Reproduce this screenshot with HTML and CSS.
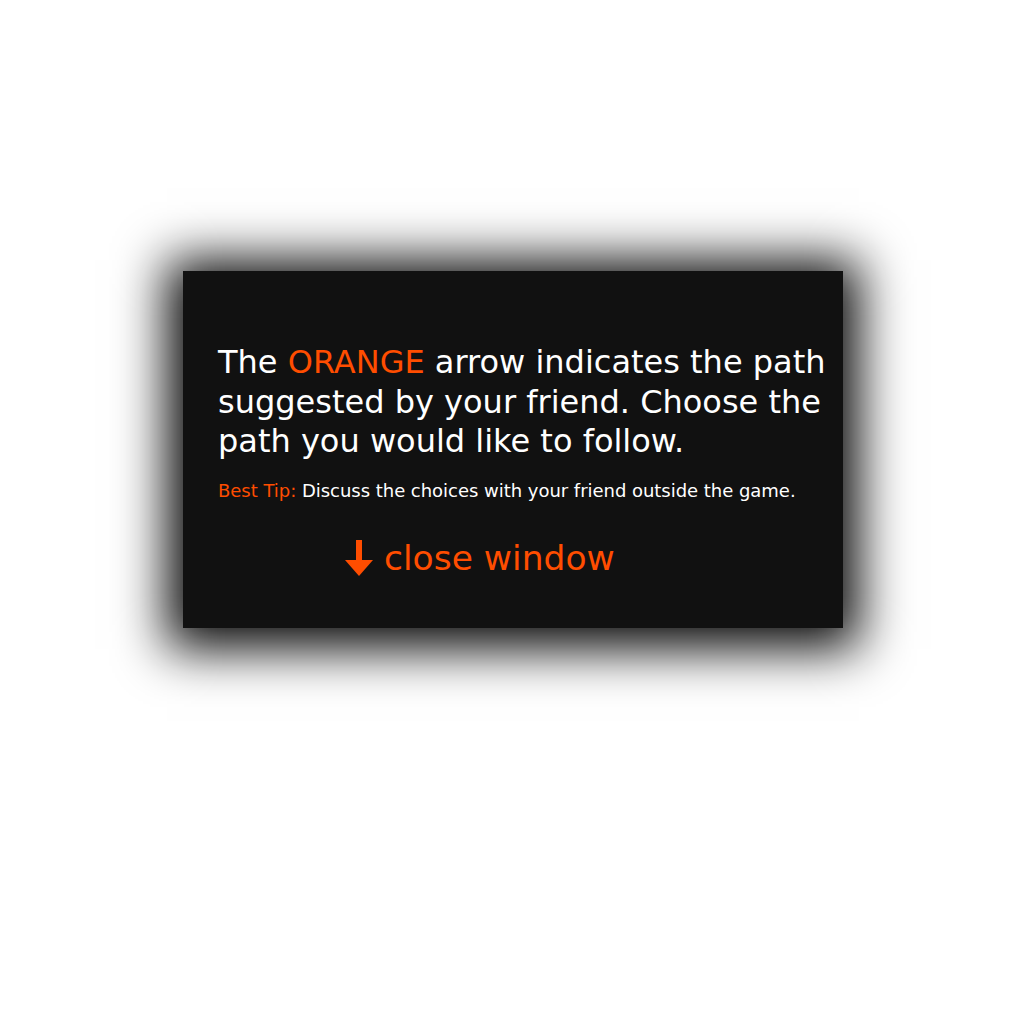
FILE: index.html
```html
<!DOCTYPE html>
<html>
<head>
<meta charset="utf-8">
<link rel="stylesheet" href="styles.css">
</head>
<body>
<div class="dialog">
  <p class="message">The <span class="accent">ORANGE</span> arrow indicates the path suggested by your friend. Choose the path you would like to follow.</p>
  <p class="tip"><span class="accent">Best Tip:</span> Discuss the choices with your friend outside the game.</p>
  <div class="close">
    <svg class="arrow" width="28" height="36" viewBox="0 0 28 36"><path d="M11 0h6v20h11L14 36 0 20h11z" fill="#ff4d00"/></svg>
    <span>close window</span>
  </div>
</div>
</body>
</html>
```
FILE: styles.css
```css
html, body { margin: 0; padding: 0; background: #fff; }
body {
  font-family: "DejaVu Sans", sans-serif;
  min-height: 1024px;
  padding-top: 271px;
  box-sizing: border-box;
}
.dialog {
  box-sizing: border-box;
  width: 660px;
  height: 357px;
  margin: 0 0 0 183px;
  background: #111;
  box-shadow: 0 5px 48px 16px rgba(0,0,0,0.97);
  padding: 72px 0 0 35px;
  color: #fff;
}
.accent { color: #ff4d00; }
.message {
  margin: 0;
  font-size: 32px;
  line-height: 39.5px;
  width: 620px;
}
.tip {
  margin: 18px 0 0;
  font-size: 18px;
  line-height: 22px;
  letter-spacing: -0.03px;
}
.close {
  display: flex;
  align-items: center;
  gap: 11px;
  margin: 36px 0 0 127px;
  color: #ff4d00;
  font-size: 34.5px;
  line-height: 40px;
}
.arrow { display: block; }
```
